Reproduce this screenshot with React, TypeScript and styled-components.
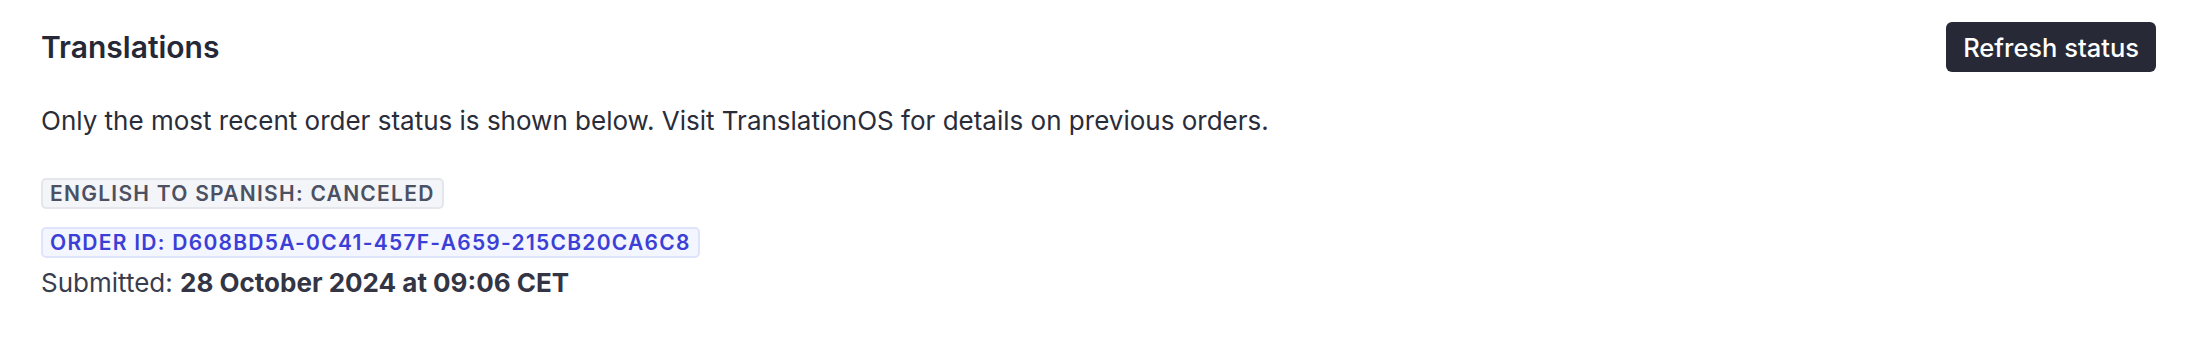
import styled, { createGlobalStyle } from "styled-components";

const GlobalStyle = createGlobalStyle`
  body {
    margin: 0;
    background: #ffffff;
    font-family: Inter, "Noto Sans", sans-serif;
    color: #272937;
  }
`;

const Page = styled.div`
  padding: 22px 40px 0 41px;
`;

const Header = styled.div`
  display: flex;
  align-items: center;
  justify-content: space-between;
  height: 50px;
`;

const Title = styled.h2`
  margin: 0;
  font-size: 30px;
  font-weight: 600;
  line-height: 40px;
  color: #262837;
`;

const Button = styled.button`
  height: 50px;
  padding: 0 17px;
  border: none;
  border-radius: 6px;
  background: #272937;
  color: #ffffff;
  font-family: inherit;
  font-size: 25.5px;
  font-weight: 500;
  cursor: pointer;
`;

const Description = styled.p`
  margin: 31px 0 0;
  font-size: 26px;
  line-height: 36px;
  color: #2a2c3a;
`;

const Badges = styled.div`
  display: flex;
  flex-direction: column;
  align-items: flex-start;
  gap: 18px;
  margin-top: 39px;
`;

const Badge = styled.span<{ $tone: "gray" | "blue" }>`
  display: inline-flex;
  align-items: center;
  height: 31px;
  box-sizing: border-box;
  padding: 0 7px;
  border-radius: 5px;
  border: 2px solid ${(p) => (p.$tone === "blue" ? "#dfe4fb" : "#e4e6eb")};
  background: ${(p) => (p.$tone === "blue" ? "#f3f5ff" : "#f4f5f8")};
  color: ${(p) => (p.$tone === "blue" ? "#3c3fd6" : "#4b5063")};
  font-size: 21px;
  font-weight: 600;
  letter-spacing: 0.06em;
  text-transform: uppercase;
`;

const Submitted = styled.p`
  margin: 7px 0 0;
  font-size: 26px;
  line-height: 36px;
  color: #3a3d4d;

  strong {
    font-weight: 700;
    color: #333545;
  }
`;

export default function App() {
  return (
    <>
      <GlobalStyle />
      <Page>
        <Header>
          <Title>Translations</Title>
          <Button>Refresh status</Button>
        </Header>
        <Description>
          Only the most recent order status is shown below. Visit TranslationOS for details on previous orders.
        </Description>
        <Badges>
          <Badge $tone="gray">English to Spanish: Canceled</Badge>
          <Badge $tone="blue">Order ID: D608BD5A-0C41-457F-A659-215CB20CA6C8</Badge>
        </Badges>
        <Submitted>
          Submitted: <strong>28 October 2024 at 09:06 CET</strong>
        </Submitted>
      </Page>
    </>
  );
}
